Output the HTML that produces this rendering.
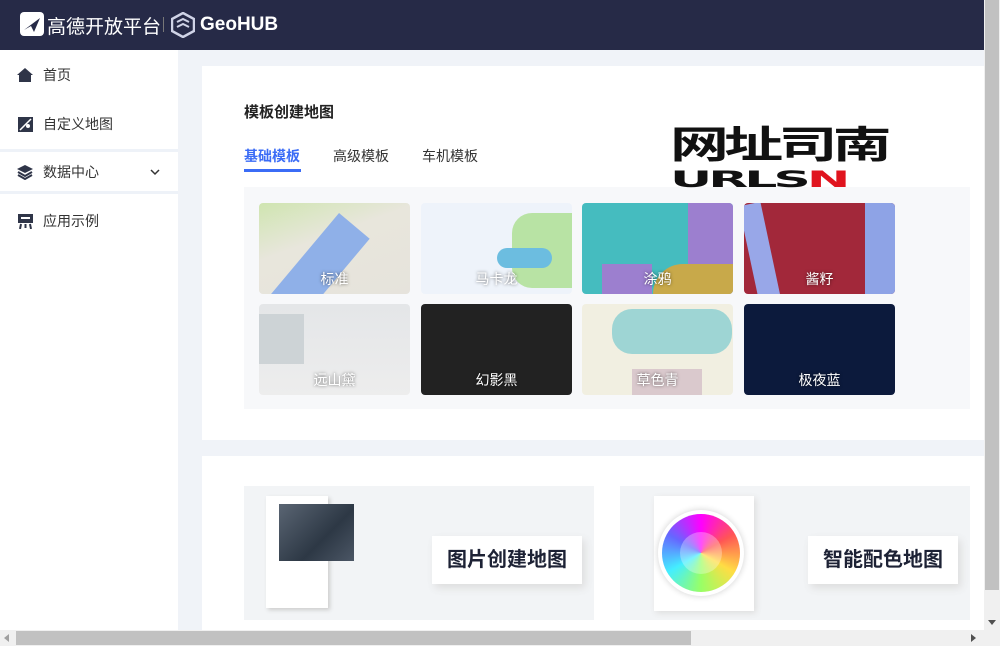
<!DOCTYPE html>
<html><head><meta charset="utf-8"><style>
*{margin:0;padding:0;box-sizing:border-box}
body{width:1000px;height:646px;overflow:hidden;font-family:"Liberation Sans","Noto Sans CJK SC",sans-serif;background:#f0f3f8;position:relative}
.hdr{position:absolute;left:0;top:0;width:984px;height:50px;background:#262a47;color:#fff}
.side{position:absolute;left:0;top:50px;width:178px;height:580px;background:#fff}
.mi{position:absolute;left:0;width:178px;height:48px;font-size:14px;color:#333;display:flex;align-items:center}
.mi span{position:absolute;left:43px}
.card{position:absolute;background:#fff}
.t{position:absolute;width:151px;height:91px;border-radius:4px;overflow:hidden}
.t b{position:absolute;left:0;right:0;bottom:5px;text-align:center;color:#fff;font-weight:normal;font-size:14px;text-shadow:0 0 3px rgba(0,0,0,.6)}
.vs{position:absolute;left:984px;top:0;width:16px;height:630px;background:#f0f0f0}
.hs{position:absolute;left:0;top:630px;width:1000px;height:16px;background:#f0f0f0}
.bt{position:absolute;left:188px;top:50px;width:150px;height:48px;background:#fff;box-shadow:3px 4px 8px #ddd;font-size:20px;font-weight:bold;color:#1d2235;text-align:center;line-height:48px}
</style></head><body>
<div class="hdr">
 <svg style="position:absolute;left:20px;top:12px" width="24" height="24"><rect x="0" y="0" width="24" height="24" rx="4" fill="#fff"/><path d="M4 18 L20 6 L14 20 L11 14 Z" fill="#262a47"/></svg>
 <div style="position:absolute;left:47px;top:12px;font-size:19px">高德开放平台</div>
 <div style="position:absolute;left:163px;top:17px;width:1px;height:15px;background:#777"></div>
 <svg style="position:absolute;left:171px;top:12px" width="24" height="26"><path d="M12 1 L23 7 L23 19 L12 25 L1 19 L1 7 Z" fill="none" stroke="#cfd3e6" stroke-width="2.5"/><path d="M6 10 L12 7 L18 10 M6 15 L12 12 L18 15" stroke="#cfd3e6" stroke-width="2" fill="none"/></svg>
 <div style="position:absolute;left:200px;top:14px;font-size:19px;font-weight:bold">GeoHUB</div>
</div>
<div class="side">
 <div class="mi" style="top:1px"><svg style="position:absolute;left:17px" width="16" height="16"><path d="M8 1 L16 8 L14 8 L14 15 L2 15 L2 8 L0 8 Z" fill="#2f3548"/></svg><span>首页</span></div>
 <div class="mi" style="top:50px"><svg style="position:absolute;left:18px" width="15" height="15"><rect width="15" height="15" fill="#2f3548"/><path d="M2 13 L13 2" stroke="#fff" stroke-width="1.5"/><circle cx="10" cy="9" r="2" fill="#fff"/></svg><span>自定义地图</span></div>
 <div style="position:absolute;top:99px;left:0;width:178px;height:3px;background:#eef2f8"></div>
 <div class="mi" style="top:98px"><svg style="position:absolute;left:17px" width="16" height="16"><path d="M8 1 L16 5 L8 9 L0 5 Z" fill="#2f3548"/><path d="M1 8 L8 12 L15 8 M1 11 L8 15 L15 11" stroke="#2f3548" stroke-width="2" fill="none"/></svg><span>数据中心</span><svg style="position:absolute;left:150px" width="10" height="8"><path d="M1 2 L5 6 L9 2" stroke="#333" stroke-width="1.5" fill="none"/></svg></div>
 <div style="position:absolute;top:141px;left:0;width:178px;height:3px;background:#eef2f8"></div>
 <div class="mi" style="top:147px"><svg style="position:absolute;left:18px" width="15" height="15"><rect x="0" y="0" width="15" height="9" fill="#2f3548"/><rect x="3" y="3" width="9" height="2" fill="#fff"/><path d="M3 10 L2 15 M12 10 L13 15 M7.5 10 L7.5 14" stroke="#2f3548" stroke-width="2"/></svg><span>应用示例</span></div>
</div>
<div class="card" style="left:202px;top:66px;width:782px;height:374px">
 <div style="position:absolute;left:42px;top:35px;font-size:15px;font-weight:bold;color:#222">模板创建地图</div>
 <div style="position:absolute;left:42px;top:80px;font-size:14px;color:#3b6cf6;font-weight:bold">基础模板</div>
 <div style="position:absolute;left:42px;top:103px;width:57px;height:3px;background:#3b6cf6"></div>
 <div style="position:absolute;left:131px;top:80px;font-size:14px;color:#333">高级模板</div>
 <div style="position:absolute;left:220px;top:80px;font-size:14px;color:#333">车机模板</div>
 <div style="position:absolute;left:42px;top:121px;width:726px;height:222px;background:#f7f8fa"></div>
 <div style="position:absolute;left:468px;top:58px;font-size:38px;font-weight:bold;color:#111;line-height:44px;transform-origin:0 0;transform:scaleX(1.55);letter-spacing:-3px">网址司南</div>
 <div style="position:absolute;left:468px;top:105px;font-size:26px;font-weight:900;font-family:'DejaVu Sans',sans-serif;color:#111;line-height:22px;transform-origin:0 0;transform:scaleX(2.0) scaleY(.85);letter-spacing:-2px">URLS<span style="color:#e0141e">N</span></div>
</div>
<div class="t" style="left:259px;top:203px;background:linear-gradient(160deg,#cfe5b0 0%,#e8e6dc 40%,#e6e3dc 100%)"><div style="position:absolute;left:40px;top:10px;width:40px;height:110px;background:#8fb0e8;transform:rotate(40deg)"></div><b>标准</b></div>
<div class="t" style="left:421px;top:203px;background:#eef3fa"><div style="position:absolute;right:0;top:10px;width:60px;height:75px;background:#b8e3a4;border-radius:20px 0 0 20px"></div><div style="position:absolute;right:20px;top:45px;width:55px;height:20px;background:#6cbde0;border-radius:10px"></div><b>马卡龙</b></div>
<div class="t" style="left:582px;top:203px;background:#45bcbf"><div style="position:absolute;right:0;top:0;width:45px;height:91px;background:#9c7fcf"></div><div style="position:absolute;right:0;bottom:0;width:80px;height:30px;background:#c8a94a;border-radius:30px 0 0 0"></div><div style="position:absolute;left:20px;bottom:0;width:50px;height:30px;background:#9c7fcf"></div><b>涂鸦</b></div>
<div class="t" style="left:744px;top:203px;background:#a2283a"><div style="position:absolute;left:5px;top:0;width:22px;height:100px;background:#98a7e8;transform:rotate(-12deg)"></div><div style="position:absolute;right:0;top:0;width:30px;height:91px;background:#8ea3e6"></div><b>酱籽</b></div>
<div class="t" style="left:259px;top:304px;background:linear-gradient(#e4e6e8,#ededed)"><div style="position:absolute;left:0;top:10px;width:45px;height:50px;background:#cdd3d6"></div><b>远山黛</b></div>
<div class="t" style="left:421px;top:304px;background:#222"><b>幻影黑</b></div>
<div class="t" style="left:582px;top:304px;background:#f1efe1"><div style="position:absolute;left:30px;top:5px;width:120px;height:45px;background:#9ed5d4;border-radius:20px"></div><div style="position:absolute;left:50px;top:65px;width:70px;height:26px;background:#dac9cd"></div><b>草色青</b></div>
<div class="t" style="left:744px;top:304px;background:#0c1a3c"><b>极夜蓝</b></div>
<div class="card" style="left:202px;top:456px;width:782px;height:174px">
 <div style="position:absolute;left:42px;top:30px;width:350px;height:134px;background:#f2f4f6">
  <div style="position:absolute;left:22px;top:10px;width:62px;height:112px;background:#fff;box-shadow:2px 2px 4px #ccc"></div>
  <div style="position:absolute;left:35px;top:18px;width:75px;height:57px;background:linear-gradient(135deg,#5a6573,#2d3845 60%,#4b5665)"></div>
  <div class="bt">图片创建地图</div>
 </div>
 <div style="position:absolute;left:418px;top:30px;width:350px;height:134px;background:#f2f4f6">
  <div style="position:absolute;left:34px;top:10px;width:100px;height:115px;background:#fff;box-shadow:2px 2px 6px #ddd"></div>
  <div style="position:absolute;left:42px;top:28px;width:78px;height:78px;border-radius:50%;background:conic-gradient(#f0f,#f55,#fd4,#9f6,#4ef,#66f,#f0f);box-shadow:0 0 0 4px #fff,0 0 6px 5px #ddd"></div>
  <div style="position:absolute;left:60px;top:46px;width:42px;height:42px;border-radius:50%;background:rgba(255,255,255,.3)"></div>
  <div class="bt">智能配色地图</div>
 </div>
</div>
<div class="vs"><div style="position:absolute;left:1px;top:0;width:14px;height:590px;background:#c1c1c1"></div><div style="position:absolute;left:4px;top:620px;border:4px solid transparent;border-top:5px solid #505050"></div></div>
<div class="hs"><div style="position:absolute;left:16px;top:1px;width:675px;height:14px;background:#c1c1c1"></div><div style="position:absolute;left:4px;top:4px;border:4px solid transparent;border-right:5px solid #a0a0a0;border-left:0"></div><div style="position:absolute;left:971px;top:4px;border:4px solid transparent;border-left:5px solid #505050;border-right:0"></div></div>
</body></html>
